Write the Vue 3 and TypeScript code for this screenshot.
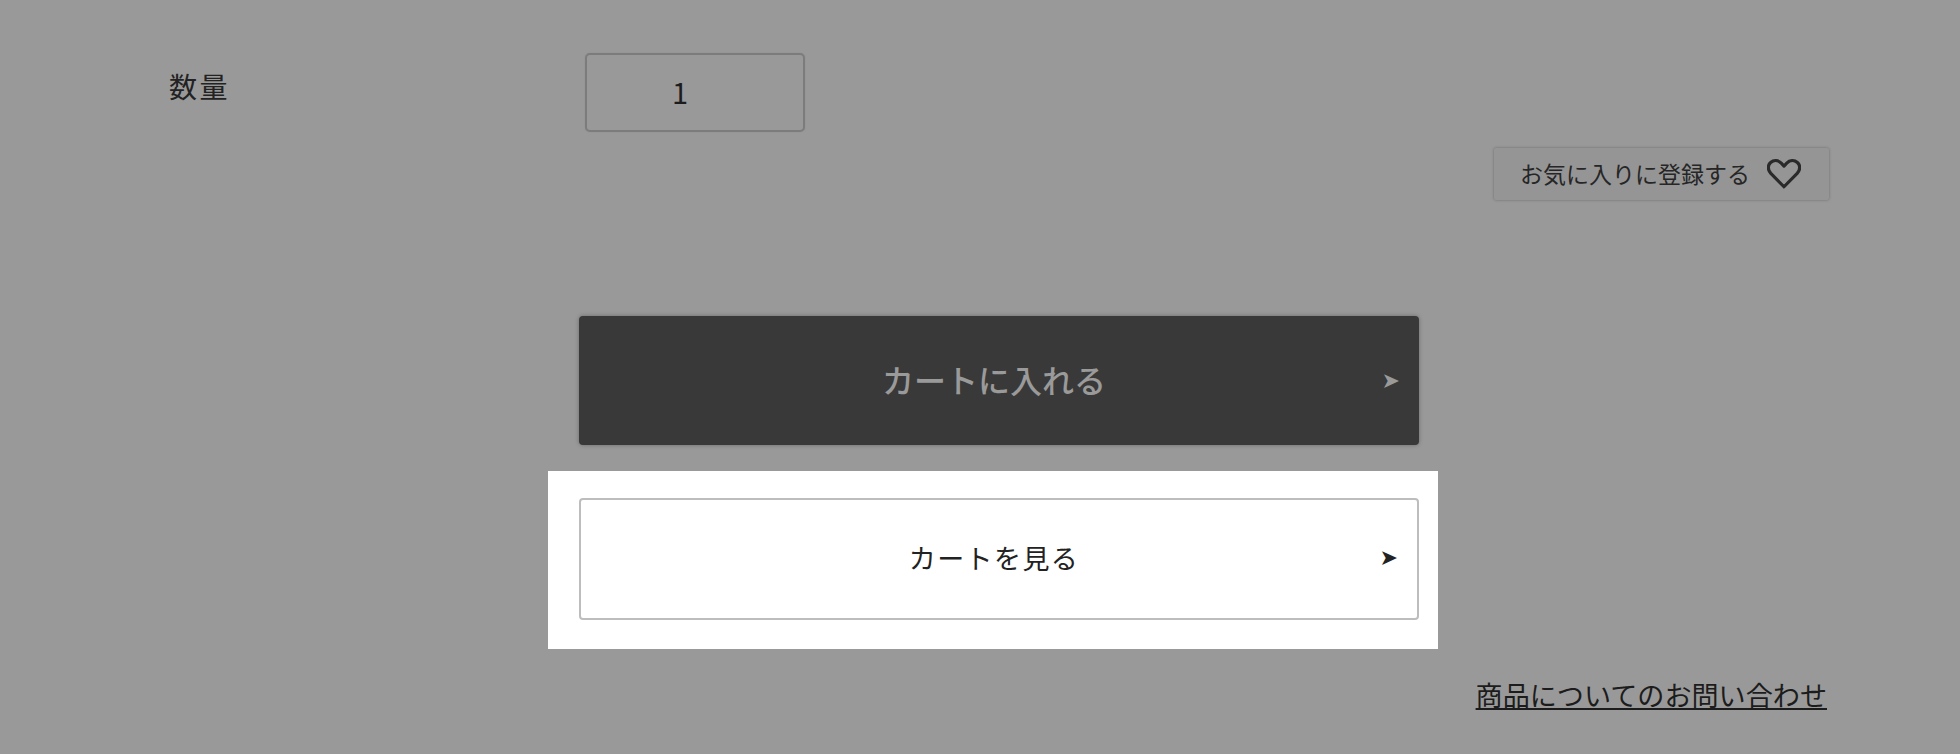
<script setup lang="ts">
const quantity = 1
</script>

<template>
  <main class="page">
    <section class="qty-row">
      <div class="qty-label">数量</div>
      <div class="qty-box">{{ quantity }}</div>
    </section>
    <div class="fav-row">
      <button class="fav" type="button">
        <span>お気に入りに登録する</span>
        <svg class="heart" viewBox="0 0 32 28" width="34" height="30" aria-hidden="true">
          <path d="M16 26 L3.6 13.4 C0.4 10 0.6 5.6 3.4 3.2 C6.4 0.6 10.6 1 13.4 3.8 L16 6.6 L18.6 3.8 C21.4 1 25.6 0.6 28.6 3.2 C31.4 5.6 31.6 10 28.4 13.4 Z" fill="none" stroke="#2a2a2a" stroke-width="3" stroke-linejoin="round" />
        </svg>
      </button>
    </div>
    <button class="cart-btn" type="button">
      <span class="label">カートに入れる</span>
      <span class="arrow">➤</span>
    </button>
    <div class="spot">
      <button class="view-btn" type="button">
        <span class="label">カートを見る</span>
        <span class="arrow">➤</span>
      </button>
    </div>
    <div class="link-row">
      <a class="link" href="#">商品についてのお問い合わせ</a>
    </div>
  </main>
</template>

<style>
html, body { margin: 0; background: #999; }
</style>

<style scoped>
.page {
  box-sizing: border-box;
  width: 1960px;
  height: 754px;
  overflow: hidden;
  padding-top: 53px;
  background: #999;
  color: #222;
  font-family: "Noto Sans CJK JP", "Noto Sans", sans-serif;
}
button { font-family: inherit; padding: 0; cursor: pointer; }
.qty-row { display: flex; align-items: flex-start; padding-left: 169px; }
.qty-label { width: 416px; font-size: 28px; letter-spacing: 2.4px; line-height: 40px; margin-top: 13px; color: #222; }
.qty-box {
  box-sizing: border-box;
  width: 220px;
  height: 79px;
  border: 2px solid #7c7c7c;
  border-radius: 5px;
  box-shadow: 0 0 1px #7c7c7c;
  display: flex;
  align-items: center;
  padding: 0 0 3px 85px;
  font-size: 29px;
  color: #1c1c1c;
}
.fav-row { display: flex; justify-content: flex-end; padding-right: 131px; margin-top: 16px; }
.fav {
  box-sizing: border-box;
  width: 335px;
  height: 52px;
  display: flex;
  align-items: center;
  gap: 17px;
  padding: 0 0 3px 26px;
  background: #959595;
  border: 0;
  border-radius: 2px;
  box-shadow: 0 0 3px rgba(0, 0, 0, .3);
  color: #262626;
  font-size: 23px;
}
.heart { flex: none; margin-top: 3px; }
.cart-btn, .view-btn {
  position: relative;
  box-sizing: border-box;
  display: flex;
  align-items: center;
  justify-content: center;
  width: 840px;
  border-radius: 4px;
}
.cart-btn {
  height: 129px;
  margin: 116px 0 0 579px;
  background: #393939;
  border: 0;
  color: #9a9a9a;
  font-size: 32px;
  font-weight: 500;
  box-shadow: 0 0 4px rgba(0, 0, 0, .3);
}
.cart-btn .label { margin: 0 10px 3px 0; }
.spot {
  box-sizing: border-box;
  width: 890px;
  height: 178px;
  margin: 26px 0 0 548px;
  padding: 27px 19px 0 31px;
  background: #fff;
}
.view-btn {
  height: 122px;
  background: #fff;
  border: 2px solid #bdbdbd;
  color: #222;
  font-size: 27px;
  letter-spacing: 1.4px;
}
.view-btn .label { margin: 0 10px 3px 0; }
.arrow {
  position: absolute;
  font-family: "DejaVu Sans", sans-serif;
  font-size: 22px;
  font-weight: 400;
  letter-spacing: 0;
  line-height: 1;
  top: 50%;
  transform: translateY(-50%);
  right: 19px;
}
.view-btn .arrow { right: 19px; margin-top: -1px; color: #222; }
.link-row { display: flex; justify-content: flex-end; padding-right: 133px; margin-top: 26px; }
.link { font-size: 27.1px; line-height: 40px; color: #1c1c1c; text-decoration: underline; }
</style>
